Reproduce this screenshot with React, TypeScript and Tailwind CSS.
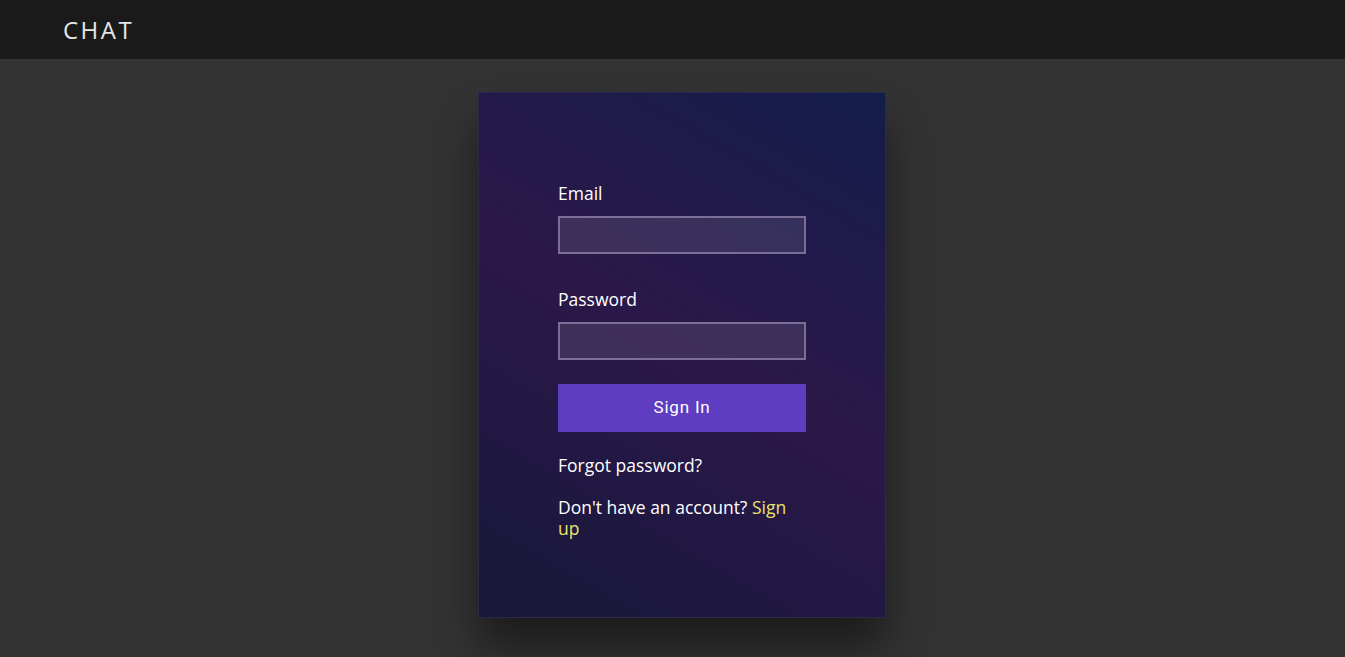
export default function App() {
  return (
    <div className="min-h-screen bg-[#333333] font-['Open_Sans',sans-serif]">
      {/* Top bar */}
      <header className="h-[59px] bg-[#1a1a1a] flex items-center px-[63px]">
        <span className="text-[24px] tracking-[2.5px] text-[#e6e6e6] leading-none">CHAT</span>
      </header>

      <main className="flex justify-center pt-[33px] pl-[19px]">
        <div
          className="w-[408px] h-[526px] border border-[#2a2a4a] pt-[88px] px-[79px]
            bg-[linear-gradient(30deg,#181838_0%,#221844_30%,#2b1848_50%,#201a4a_75%,#141d4a_100%)]
            shadow-[0_30px_40px_rgba(0,0,0,0.45)]"
        >
          <form className="flex flex-col" onSubmit={(e) => e.preventDefault()}>
            <label className="text-[17.5px] text-white leading-[24px]">Email</label>
            <input
              type="email"
              className="mt-[11px] h-[38px] w-full bg-white/10 border-2 border-[#7a6e96] outline-none text-white px-2"
            />

            <label className="mt-[33px] text-[17.5px] text-white leading-[24px]">Password</label>
            <input
              type="password"
              className="mt-[11px] h-[38px] w-full bg-white/10 border-2 border-[#7a6e96] outline-none text-white px-2"
            />

            <button
              type="submit"
              className="mt-[24px] h-[48px] w-full bg-[#5f3dc0] text-white text-[17px] tracking-[0.8px] font-['Roboto',sans-serif]"
            >
              Sign In
            </button>

            <p className="mt-[23px] text-[17.5px] text-white leading-[20px]">Forgot password?</p>

            <p className="mt-[22px] text-[17.5px] text-white leading-[21px]">
              Don't have an account? <span className="text-[#ebe26a]">Sign up</span>
            </p>
          </form>
        </div>
      </main>
    </div>
  );
}
